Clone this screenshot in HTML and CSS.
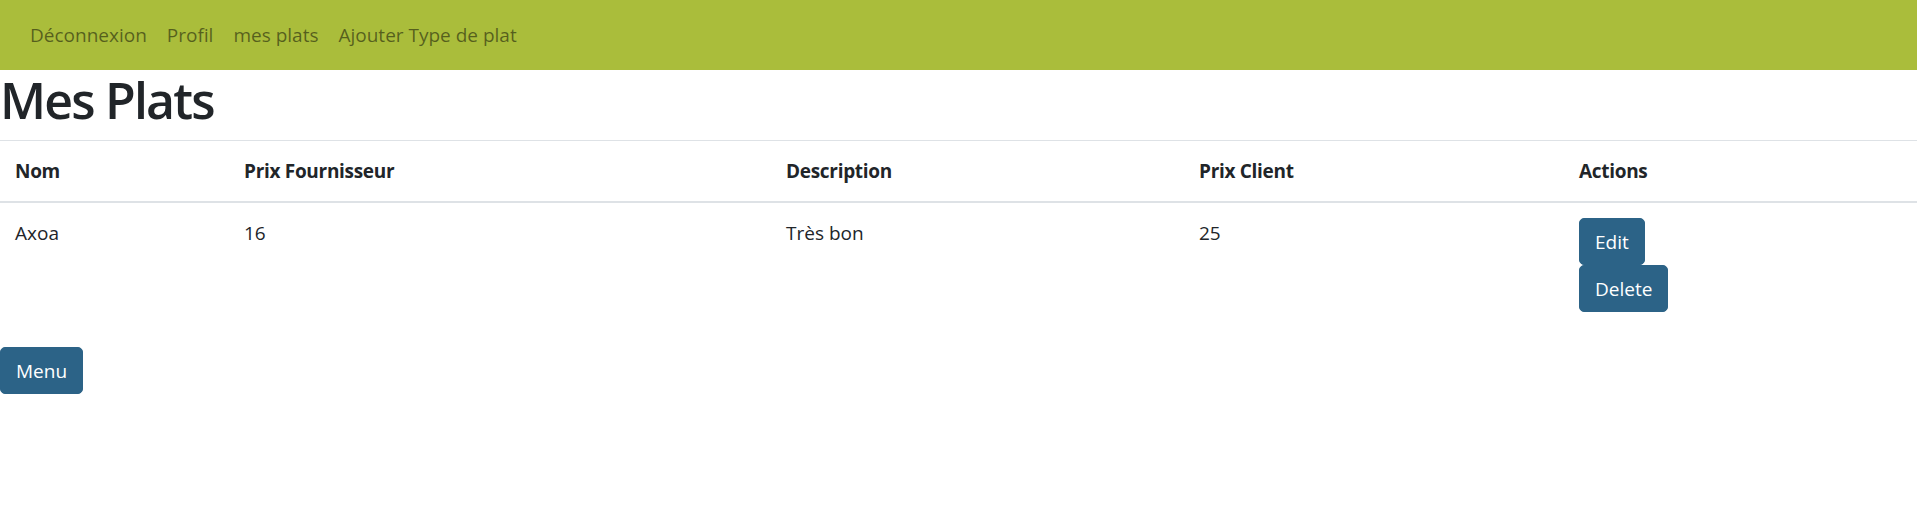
FILE: index.html
```html
<!DOCTYPE html>
<html lang="fr">
<head>
<meta charset="utf-8">
<title>Mes Plats</title>
<link rel="stylesheet" href="styles.css">
</head>
<body>
<nav class="navbar">
  <a class="nav-link" href="#">Déconnexion</a>
  <a class="nav-link" href="#">Profil</a>
  <a class="nav-link" href="#">mes plats</a>
  <a class="nav-link" href="#">Ajouter Type de plat</a>
</nav>
<h1 class="title">Mes Plats</h1>
<table class="table">
  <thead>
    <tr>
      <th class="col-nom">Nom</th>
      <th class="col-fourn">Prix Fournisseur</th>
      <th class="col-desc">Description</th>
      <th class="col-client">Prix Client</th>
      <th class="col-actions">Actions</th>
    </tr>
  </thead>
  <tbody>
    <tr>
      <td>Axoa</td>
      <td>16</td>
      <td>Très bon</td>
      <td>25</td>
      <td>
        <div class="actions">
          <a class="btn" href="#">Edit</a>
          <a class="btn" href="#">Delete</a>
        </div>
      </td>
    </tr>
  </tbody>
</table>
<a class="btn" href="#">Menu</a>
</body>
</html>
```

FILE: styles.css
```css
html, body {
  margin: 0;
  padding: 0;
}
body {
  font-family: "Open Sans", "Noto Sans", sans-serif;
  font-size: 19px;
  line-height: 30px;
  color: #212529;
  background: #fff;
}
.navbar {
  display: flex;
  align-items: center;
  padding: 10px 20px;
  background: #aabd3b;
}
.nav-link {
  display: block;
  padding: 10px;
  color: rgba(0, 0, 0, 0.5);
  text-decoration: none;
}
.title {
  margin: 0 0 10px;
  font-size: 50px;
  line-height: 60px;
  font-weight: 600;
  letter-spacing: -1.8px;
}
.table {
  width: 100%;
  border-collapse: collapse;
  margin-bottom: 20px;
  table-layout: fixed;
}
.table th,
.table td {
  padding: 15px;
  text-align: left;
  vertical-align: top;
  border-top: 1px solid #dee2e6;
}
.table thead th {
  vertical-align: bottom;
  border-bottom: 2px solid #dee2e6;
  font-weight: 700;
  letter-spacing: -0.3px;
}
.col-nom { width: 199px; }
.col-fourn { width: 512px; }
.col-desc { width: 383px; }
.col-client { width: 350px; }
.col-actions { width: auto; }
.actions {
  display: flex;
  flex-direction: column;
  align-items: flex-start;
}
.btn {
  display: inline-block;
  padding: 7.5px 15px;
  border: 1px solid #2c6387;
  border-radius: 5px;
  background: #2c6387;
  color: #fff;
  text-decoration: none;
  line-height: 30px;
}
```
